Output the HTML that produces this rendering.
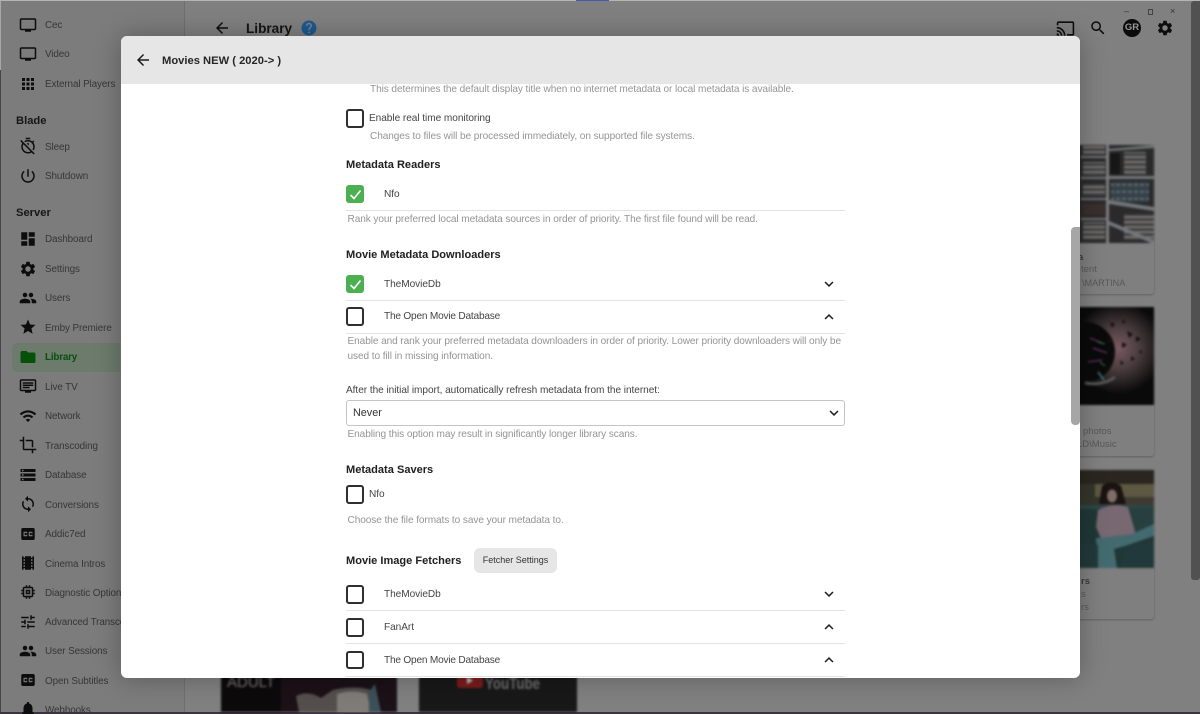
<!DOCTYPE html>
<html><head><meta charset="utf-8"><title>Library</title>
<style>
html,body{margin:0;padding:0;width:1200px;height:714px;overflow:hidden;background:#808080}
body{font-family:"Liberation Sans",sans-serif;position:relative}
#w{position:absolute;left:0;top:0;width:1200px;height:714px;overflow:hidden;filter:blur(.3px)}
.t{position:absolute;white-space:nowrap;line-height:16px;height:16px;margin-top:1.5px}
.s{font-size:9.9px;color:#363636;left:45px;letter-spacing:-.1px}
.h{font-size:11.2px;font-weight:bold;color:#161616;left:16px;margin-top:.5px}
.i{position:absolute;width:18px;height:18px;fill:#0d0d0d}
.d{font-size:10.1px;color:#949494;letter-spacing:-.09px}
.b{font-size:10.1px;color:#444;letter-spacing:-.05px}
.g{font-size:11.05px;font-weight:bold;color:#202020;left:346px;margin-top:.5px}
.c{position:absolute;left:345.5px;width:14.5px;height:14.5px;border:2px solid #2f2f2f;border-radius:3px;background:#fff}
.k{position:absolute;left:345.5px;width:18.5px;height:18.5px;border-radius:3px;background:#4caf50}
.k svg{position:absolute;left:2px;top:2px;width:15px;height:15px;fill:none;stroke:#fff;stroke-width:1.6}
.l{position:absolute;left:346px;width:499px;height:1px;background:#e2e2e2}
.v{position:absolute;left:820px;width:18px;height:18px;fill:#1e1e1e}
.card{position:absolute;left:1040px;width:114px;background:#7f7f7f;border-radius:3px;box-shadow:0 1px 2px rgba(0,0,0,.25)}
.ct{font-size:9.5px;color:#585858}
.im{position:absolute;filter:blur(1.1px)}
</style></head><body><div id="w">
<svg width="0" height="0" style="position:absolute">
<symbol id="tv" viewBox="0 0 24 24"><path d="M21 3H3c-1.1 0-2 .9-2 2v12c0 1.1.9 2 2 2h5v2h8v-2h5c1.1 0 1.99-.9 1.99-2L23 5c0-1.1-.9-2-2-2zm0 14H3V5h18v12z"/></symbol>
<symbol id="ltv" viewBox="0 0 24 24"><path d="M21 3H3c-1.1 0-2 .9-2 2v12c0 1.1.9 2 2 2h5v2h8v-2h5c1.1 0 1.99-.9 1.99-2L23 5c0-1.1-.9-2-2-2zm0 14H3V5h18v12zM5 7h14v2H5zM5 10h14v2H5zM5 13h9v2H5z"/></symbol>
<symbol id="apps" viewBox="0 0 24 24"><path d="M4 8h4V4H4v4zm6 12h4v-4h-4v4zm-6 0h4v-4H4v4zm0-6h4v-4H4v4zm6 0h4v-4h-4v4zm6-10v4h4V4h-4zm-6 4h4V4h-4v4zm6 6h4v-4h-4v4zm0 6h4v-4h-4v4z"/></symbol>
<symbol id="toff" viewBox="0 0 24 24"><path d="M19.04 4.55l-1.42 1.42C16.07 4.74 14.12 4 12 4c-1.83 0-3.53.55-4.95 1.48l1.46 1.46C9.53 6.35 10.73 6 12 6c3.87 0 7 3.13 7 7 0 1.27-.35 2.47-.94 3.49l1.45 1.45C20.45 16.53 21 14.83 21 13c0-2.12-.74-4.07-1.97-5.61l1.42-1.42-1.41-1.42zM15 1H9v2h6V1zm-4 8.44l2 2V8h-2v1.44zM3.02 4L1.61 5.41 4.36 8.16C3.5 9.57 3 11.22 3 13c0 4.97 4.03 9 9 9 1.78 0 3.44-.5 4.84-1.36l2.75 2.75 1.41-1.41L3.02 4zM12 20c-3.87 0-7-3.13-7-7 0-1.23.32-2.39.88-3.39l9.51 9.51c-1 .56-2.16.88-3.39.88z"/></symbol>
<symbol id="pow" viewBox="0 0 24 24"><path d="M13 3h-2v10h2V3zm4.83 2.17l-1.42 1.42C17.99 7.86 19 9.81 19 12c0 3.87-3.13 7-7 7s-7-3.13-7-7c0-2.19 1.01-4.14 2.58-5.42L6.17 5.17C4.23 6.82 3 9.26 3 12c0 4.97 4.03 9 9 9s9-4.03 9-9c0-2.74-1.23-5.18-3.17-6.83z"/></symbol>
<symbol id="dash" viewBox="0 0 24 24"><path d="M3 13h8V3H3v10zm0 8h8v-6H3v6zm10 0h8V11h-8v10zm0-18v6h8V3h-8z"/></symbol>
<symbol id="gear" viewBox="0 0 24 24"><path d="M19.14 12.94c.04-.3.06-.61.06-.94 0-.32-.02-.64-.07-.94l2.03-1.58c.18-.14.23-.41.12-.61l-1.92-3.32c-.12-.22-.37-.29-.59-.22l-2.39.96c-.5-.38-1.03-.7-1.62-.94l-.36-2.54c-.04-.24-.24-.41-.48-.41h-3.84c-.24 0-.43.17-.47.41l-.36 2.54c-.59.24-1.13.57-1.62.94l-2.39-.96c-.22-.08-.47 0-.59.22L2.74 8.87c-.12.21-.08.47.12.61l2.03 1.58c-.05.3-.09.63-.09.94s.02.64.07.94l-2.03 1.58c-.18.14-.23.41-.12.61l1.92 3.32c.12.22.37.29.59.22l2.39-.96c.5.38 1.03.7 1.62.94l.36 2.54c.05.24.24.41.48.41h3.84c.24 0 .44-.17.47-.41l.36-2.54c.59-.24 1.13-.56 1.62-.94l2.39.96c.22.08.47 0 .59-.22l1.92-3.32c.12-.22.07-.47-.12-.61l-2.01-1.58zM12 15.6c-1.98 0-3.6-1.62-3.6-3.6s1.62-3.6 3.6-3.6 3.6 1.62 3.6 3.6-1.62 3.6-3.6 3.6z"/></symbol>
<symbol id="ppl" viewBox="0 0 24 24"><path d="M16 11c1.66 0 2.99-1.34 2.99-3S17.66 5 16 5c-1.66 0-3 1.34-3 3s1.34 3 3 3zm-8 0c1.66 0 2.99-1.34 2.99-3S9.66 5 8 5C6.34 5 5 6.34 5 8s1.34 3 3 3zm0 2c-2.33 0-7 1.17-7 3.5V19h14v-2.5c0-2.33-4.67-3.5-7-3.5zm8 0c-.29 0-.62.02-.97.05 1.16.84 1.97 1.97 1.97 3.45V19h6v-2.5c0-2.33-4.67-3.5-7-3.5z"/></symbol>
<symbol id="star" viewBox="0 0 24 24"><path d="M12 17.27L18.18 21l-1.64-7.03L22 9.24l-7.19-.61L12 2 9.19 8.63 2 9.24l5.46 4.73L5.82 21z"/></symbol>
<symbol id="fold" viewBox="0 0 24 24"><path d="M10 4H4c-1.1 0-1.99.9-1.99 2L2 18c0 1.1.9 2 2 2h16c1.1 0 2-.9 2-2V8c0-1.1-.9-2-2-2h-8l-2-2z"/></symbol>
<symbol id="wifi" viewBox="0 0 24 24"><path d="M1 9l2 2c4.97-4.97 13.03-4.97 18 0l2-2C16.93 2.93 7.08 2.93 1 9zm8 8l3 3 3-3c-1.65-1.66-4.34-1.66-6 0zm-4-4l2 2c2.76-2.76 7.24-2.76 10 0l2-2C15.14 9.14 8.87 9.14 5 13z"/></symbol>
<symbol id="crop" viewBox="0 0 24 24"><path d="M17 15h2V7c0-1.1-.9-2-2-2H9v2h8v8zM7 17V1H5v4H1v2h4v10c0 1.1.9 2 2 2h10v4h2v-4h4v-2H7z"/></symbol>
<symbol id="db" viewBox="0 0 24 24"><path d="M2 20h20v-4H2v4zm2-3h2v2H4v-2zM2 4v4h20V4H2zm4 3H4V5h2v2zm-4 7h20v-4H2v4zm2-3h2v2H4v-2z"/></symbol>
<symbol id="sync" viewBox="0 0 24 24"><path d="M12 4V1L8 5l4 4V6c3.31 0 6 2.69 6 6 0 1.01-.25 1.97-.7 2.8l1.46 1.46C19.54 15.03 20 13.57 20 12c0-4.42-3.58-8-8-8zm0 14c-3.31 0-6-2.69-6-6 0-1.01.25-1.97.7-2.8L5.24 7.74C4.46 8.97 4 10.43 4 12c0 4.42 3.58 8 8 8v3l4-4-4-4v3z"/></symbol>
<symbol id="cc" viewBox="0 0 24 24"><path d="M19 4H5c-1.11 0-2 .9-2 2v12c0 1.1.89 2 2 2h14c1.1 0 2-.9 2-2V6c0-1.1-.9-2-2-2zm-8 7H9.5v-.5h-2v3h2V13H11v1c0 .55-.45 1-1 1H7c-.55 0-1-.45-1-1v-4c0-.55.45-1 1-1h3c.55 0 1 .45 1 1v1zm7 0h-1.5v-.5h-2v3h2V13H18v1c0 .55-.45 1-1 1h-3c-.55 0-1-.45-1-1v-4c0-.55.45-1 1-1h3c.55 0 1 .45 1 1v1z"/></symbol>
<symbol id="film" viewBox="0 0 24 24"><path d="M18 3v2h-2V3H8v2H6V3H4v18h2v-2h2v2h8v-2h2v2h2V3h-2zM8 17H6v-2h2v2zm0-4H6v-2h2v2zm0-4H6V7h2v2zm10 8h-2v-2h2v2zm0-4h-2v-2h2v2zm0-4h-2V7h2v2z"/></symbol>
<symbol id="mem" viewBox="0 0 24 24"><path d="M15 9H9v6h6V9zm-2 4h-2v-2h2v2zm8-2V9h-2V7c0-1.1-.9-2-2-2h-2V3h-2v2h-2V3H9v2H7c-1.1 0-2 .9-2 2v2H3v2h2v2H3v2h2v2c0 1.1.9 2 2 2h2v2h2v-2h2v2h2v-2h2c1.1 0 2-.9 2-2v-2h2v-2h-2v-2h2zm-4 6H7V7h10v10z"/></symbol>
<symbol id="tune" viewBox="0 0 24 24"><path d="M3 17v2h6v-2H3zM3 5v2h10V5H3zm10 16v-2h8v-2h-8v-2h-2v6h2zM7 9v2H3v2h4v2h2V9H7zm14 4v-2H11v2h10zm-6-4h2V7h4V5h-4V3h-2v6z"/></symbol>
<symbol id="bell" viewBox="0 0 24 24"><path d="M12 22c1.1 0 2-.9 2-2h-4c0 1.1.9 2 2 2zm6-6v-5c0-3.07-1.63-5.64-4.5-6.32V4c0-.83-.67-1.5-1.5-1.5s-1.5.67-1.5 1.5v.68C7.64 5.36 6 7.92 6 11v5l-2 2v1h16v-1l-2-2z"/></symbol>
<symbol id="back" viewBox="0 0 24 24"><path d="M20 11H7.83l5.59-5.59L12 4l-8 8 8 8 1.41-1.41L7.83 13H20v-2z"/></symbol>
<symbol id="cast" viewBox="0 0 24 24"><path d="M21 3H3c-1.1 0-2 .9-2 2v3h2V5h18v14h-7v2h7c1.1 0 2-.9 2-2V5c0-1.1-.9-2-2-2zM1 18v3h3c0-1.66-1.34-3-3-3zm0-4v2c2.76 0 5 2.24 5 5h2c0-3.87-3.13-7-7-7zm0-4v2c4.97 0 9 4.03 9 9h2c0-6.08-4.93-11-11-11z"/></symbol>
<symbol id="srch" viewBox="0 0 24 24"><path d="M15.5 14h-.79l-.28-.27C15.41 12.59 16 11.11 16 9.5 16 5.91 13.09 3 9.5 3S3 5.91 3 9.5 5.91 16 9.5 16c1.61 0 3.09-.59 4.23-1.57l.27.28v.79l5 4.99L20.49 19l-4.99-5zm-6 0C7.01 14 5 11.99 5 9.5S7.01 5 9.5 5 14 7.01 14 9.5 11.99 14 9.5 14z"/></symbol>
<symbol id="dn" viewBox="0 0 24 24"><path d="M7.41 8.59L12 13.17l4.59-4.58L18 10l-6 6-6-6z"/></symbol>
<symbol id="up" viewBox="0 0 24 24"><path d="M7.41 15.41L12 10.83l4.59 4.58L18 14l-6-6-6 6z"/></symbol>
<symbol id="help" viewBox="0 0 24 24"><path d="M12 2C6.48 2 2 6.48 2 12s4.48 10 10 10 10-4.48 10-10S17.52 2 12 2zm1 17h-2v-2h2v2zm2.07-7.75l-.9.92C13.45 12.9 13 13.5 13 15h-2v-.5c0-1.1.45-2.1 1.17-2.83l1.24-1.26c.37-.36.59-.86.59-1.41 0-1.1-.9-2-2-2s-2 .9-2 2H8c0-2.21 1.79-4 4-4s4 1.79 4 4c0 .88-.36 1.68-.93 2.25z"/></symbol>
</svg>

<!-- page chrome -->
<div style="position:absolute;left:0;top:0;width:1200px;height:1px;background:#b5b5b5"></div>
<div style="position:absolute;left:576px;top:0;width:33px;height:1px;background:#4a58ad"></div>
<div style="position:absolute;left:0;top:70px;width:1px;height:644px;background:#45454f"></div>
<div style="position:absolute;left:0;top:1px;width:1px;height:69px;background:#a8a8a8"></div>
<div style="position:absolute;left:184px;top:1px;width:1px;height:712px;background:#6f6f6f"></div>
<div style="position:absolute;left:1px;top:1px;width:183px;height:712px;background:#7c7c7c"></div>
<div style="position:absolute;left:1191px;top:1px;width:9px;height:579px;background:#515151;border-radius:3px 0 3px 3px"></div>
<div style="position:absolute;left:0;top:712px;width:1200px;height:2px;background:#3c3340"></div>

<!-- sidebar -->
<svg class="i" style="left:19px;top:16px"><use href="#tv"/></svg><div class="t s" style="top:16.5px">Cec</div>
<svg class="i" style="left:19px;top:45px"><use href="#tv"/></svg><div class="t s" style="top:45.5px">Video</div>
<svg class="i" style="left:19px;top:75px"><use href="#apps"/></svg><div class="t s" style="top:75px">External Players</div>
<div class="t h" style="top:112px">Blade</div>
<svg class="i" style="left:19px;top:137px"><use href="#toff"/></svg><div class="t s" style="top:138px">Sleep</div>
<svg class="i" style="left:19px;top:167px"><use href="#pow"/></svg><div class="t s" style="top:167.5px">Shutdown</div>
<div class="t h" style="top:204.5px">Server</div>
<svg class="i" style="left:19px;top:230px"><use href="#dash"/></svg><div class="t s" style="top:230.5px">Dashboard</div>
<svg class="i" style="left:19px;top:260px"><use href="#gear"/></svg><div class="t s" style="top:260.5px">Settings</div>
<svg class="i" style="left:19px;top:289px"><use href="#ppl"/></svg><div class="t s" style="top:289.5px">Users</div>
<svg class="i" style="left:19px;top:318px"><use href="#star"/></svg><div class="t s" style="top:319px">Emby Premiere</div>
<div style="position:absolute;left:12px;top:343px;width:108px;height:29px;background:#6c7b6c;border-radius:5px 0 0 5px"></div>
<svg class="i" style="left:19px;top:348px;fill:#07500a"><use href="#fold"/></svg><div class="t s" style="top:348.5px;color:#0a4f0c;font-weight:bold;letter-spacing:-.2px">Library</div>
<svg class="i" style="left:19px;top:377px"><use href="#ltv"/></svg><div class="t s" style="top:378px">Live TV</div>
<svg class="i" style="left:19px;top:407px"><use href="#wifi"/></svg><div class="t s" style="top:407.5px">Network</div>
<svg class="i" style="left:19px;top:436px"><use href="#crop"/></svg><div class="t s" style="top:437px">Transcoding</div>
<svg class="i" style="left:19px;top:466px"><use href="#db"/></svg><div class="t s" style="top:466.5px">Database</div>
<svg class="i" style="left:19px;top:495px"><use href="#sync"/></svg><div class="t s" style="top:496px">Conversions</div>
<svg class="i" style="left:19px;top:525px"><use href="#cc"/></svg><div class="t s" style="top:525.5px">Addic7ed</div>
<svg class="i" style="left:19px;top:554px"><use href="#film"/></svg><div class="t s" style="top:555px">Cinema Intros</div>
<svg class="i" style="left:19px;top:583px"><use href="#mem"/></svg><div class="t s" style="top:584px">Diagnostic Options</div>
<svg class="i" style="left:19px;top:613px"><use href="#tune"/></svg><div class="t s" style="top:613.5px">Advanced Transcoding</div>
<svg class="i" style="left:19px;top:642px"><use href="#ppl"/></svg><div class="t s" style="top:642.5px">User Sessions</div>
<svg class="i" style="left:19px;top:671px"><use href="#cc"/></svg><div class="t s" style="top:672px">Open Subtitles</div>
<svg class="i" style="left:19px;top:700px"><use href="#bell"/></svg><div class="t s" style="top:701px">Webhooks</div>

<!-- header -->
<svg class="i" style="left:213px;top:19px"><use href="#back"/></svg>
<div class="t" style="left:246px;top:19.5px;font-size:13.6px;font-weight:bold;color:#141414">Library</div>
<svg class="i" style="left:300px;top:19px;fill:#1d5a90"><use href="#help"/></svg>
<svg class="i" style="left:1056px;top:19px;width:19px;height:19px"><use href="#cast"/></svg>
<svg class="i" style="left:1089px;top:19px"><use href="#srch"/></svg>
<div style="position:absolute;left:1123px;top:19px;width:18px;height:18px;border-radius:50%;background:#0b0b0b;color:#9a9a9a;font-size:9.5px;font-weight:bold;line-height:18px;text-align:center">GR</div>
<svg class="i" style="left:1156px;top:19px"><use href="#gear"/></svg>
<div class="t" style="left:1124px;top:1.5px;font-size:9px;color:#333">–</div>
<div style="position:absolute;left:1148px;top:9px;width:3px;height:4px;border:1px solid #444"></div>
<div class="t" style="left:1170px;top:1.5px;font-size:9px;color:#333">×</div>

<!-- cards -->
<div class="card" style="top:145px;height:149px"></div>
<div class="card" style="top:307px;height:149px"></div>
<div class="card" style="top:470px;height:149px"></div>
<svg class="im" style="left:1040px;top:145px" width="114" height="98" viewBox="1040 145 114 98">
<defs><pattern id="st" width="4" height="5" patternUnits="userSpaceOnUse"><rect width="4" height="5" fill="#3f3f40"/><rect y="1" width="4" height="2.2" fill="#767472"/></pattern>
<pattern id="st2" width="6" height="7" patternUnits="userSpaceOnUse"><rect width="6" height="7" fill="#35424a"/><rect y="2" width="4" height="1.6" fill="#6c7074"/></pattern></defs>
<rect x="1040" y="145" width="114" height="98" fill="#2b2a2b"/>
<rect x="1083" y="146" width="22" height="9" fill="url(#st)"/><rect x="1083" y="162" width="22" height="14" fill="url(#st)"/>
<rect x="1083" y="184" width="22" height="12" fill="url(#st)"/><rect x="1083" y="204" width="22" height="11" fill="#39302d"/><rect x="1083" y="222" width="22" height="18" fill="url(#st)"/>
<rect x="1124" y="152" width="22" height="23" fill="url(#st)"/><rect x="1111" y="182" width="38" height="20" fill="url(#st2)"/>
<rect x="1124" y="214" width="30" height="26" fill="url(#st)"/><rect x="1110" y="153" width="10" height="21" fill="#161616"/>
<rect x="1106" y="145" width="3" height="98" fill="#7d7d7d"/>
<path d="M1081 156h25v2h-25zM1081 177h25v2h-25zM1081 198h25v2h-25zM1081 218h25v2h-25zM1109 149l45-4v3l-45 3zM1109 176h45v3h-45zM1109 200l45 7v4l-45-7zM1109 221l45 19v3h-3l-42-18z" fill="#72767a"/>
</svg>
<svg class="im" style="left:1040px;top:307px" width="114" height="98" viewBox="1040 307 114 98">
<defs><radialGradient id="a" gradientUnits="userSpaceOnUse" cx="1118" cy="348" r="46"><stop offset="0" stop-color="#7a5a62"/><stop offset=".45" stop-color="#4b3d40"/><stop offset="1" stop-color="#0a0a0a"/></radialGradient></defs>
<rect x="1040" y="307" width="114" height="98" fill="#070707"/>
<rect x="1040" y="307" width="114" height="98" fill="url(#a)"/>
<circle cx="1085" cy="352" r="30" fill="#0a0a0a"/>
<path d="M1110 322l5 2-3 4zM1122 320l4 1-3 3zM1127 331l6 3-4 4zM1136 336l5 3-5 3zM1122 342l5 3-5 3zM1131 356l4 3-4 2zM1120 360l4 3-3 2zM1140 350l3 3-4 0zM1108 338l4 3-4 2zM1112 352l3 2-3 2zM1105 368l5 2-3 3z" fill="#141012"/>
<path d="M1090 338l12 5M1093 348l14 5M1088 362l14-2" stroke="#7c3a78" stroke-width="1" fill="none"/><path d="M1098 342l7 2M1100 362l5 4" stroke="#357f52" stroke-width="1" fill="none"/>
<path d="M1098 372l6 8" stroke="#3f7f90" stroke-width="1.5" fill="none"/>
<path d="M1085 383q18 3 30-6" stroke="#555" stroke-width="3" fill="none"/>
</svg>
<svg class="im" style="left:1040px;top:470px" width="114" height="98" viewBox="1040 470 114 98">
<rect x="1040" y="470" width="114" height="98" fill="#203736"/>
<rect x="1040" y="470" width="114" height="14" fill="#2a261f"/><rect x="1040" y="484" width="114" height="21" fill="#34352a"/><rect x="1095" y="484" width="59" height="13" fill="#5c5842"/>
<rect x="1125" y="497" width="29" height="8" fill="#3f3a30"/>
<path d="M1040 505h114v4h-114z" fill="#2b4746"/>
<path d="M1125 508h29v22l-20 4z" fill="#27403f"/>
<path d="M1102 486q9-7 19 0l5 18h-27z" fill="#191311"/><ellipse cx="1112" cy="496" rx="5" ry="6.5" fill="#7f6d67"/>
<path d="M1098 510q15-8 30-3l8 28-12 6h-22l-6-14z" fill="#786872"/>
<path d="M1096 538q22-2 36-4l22-10v12l-26 9-14 4 3 19h-19z" fill="#436a6e"/>
<path d="M1040 545q30-5 58 0v23h-58zM1125 548l29-8v28h-34z" fill="#21393a"/>
</svg>
<div class="t ct" style="left:1078px;top:248px;font-weight:bold;color:#3c3c3c">a</div>
<div class="t ct" style="left:1081px;top:260.5px">tent</div>
<div class="t ct" style="left:1082px;top:273.5px;font-size:9.1px">\MARTINA</div>
<div class="t ct" style="left:1083px;top:422.5px">photos</div>
<div class="t ct" style="left:1077px;top:435.5px">LD\Music</div>
<div class="t ct" style="left:1081px;top:572.5px;font-weight:bold;color:#3c3c3c">rs</div>
<div class="t ct" style="left:1081px;top:585.5px">s</div>
<div class="t ct" style="left:1081px;top:598.5px">rs</div>

<!-- bottom posters -->
<svg class="im" style="left:221px;top:660px" width="176" height="52" viewBox="0 0 176 52">
<rect width="176" height="52" fill="#0d0a0c"/><rect x="60" y="0" width="116" height="52" fill="#1b1116"/>
<path d="M75 36q12-6 25 2l12-8q22-5 38 0l6 22H78z" fill="#544f4d"/><path d="M116 34q16-5 30 0l4 18h-34z" fill="#7f7b76"/><path d="M148 32l6-8 6 28h-12z" fill="#3c505a"/>
<text x="6" y="27" font-family="Liberation Sans,sans-serif" font-size="15" fill="#767676">ADULT</text>
</svg>
<svg class="im" style="left:419px;top:660px" width="158" height="52" viewBox="0 0 158 52">
<rect width="158" height="52" fill="#181818"/><rect x="38" y="13" width="26" height="15" rx="3" fill="#7a1c1c"/><path d="M48 17l6 3.5-6 3.5z" fill="#bbb"/>
<text x="66" y="29" font-family="Liberation Sans,sans-serif" font-size="17" font-weight="bold" fill="#6e6e6e" textLength="55" lengthAdjust="spacingAndGlyphs">YouTube</text>
</svg>

<!-- modal -->
<div style="position:absolute;left:120.5px;top:36px;width:959.5px;height:642px;background:#fff;border-radius:6px;box-shadow:0 0 26px rgba(0,0,0,.28);overflow:hidden">
<div style="position:absolute;left:0;top:0;width:959.5px;height:47.5px;background:#e6e6e6"></div>
<div style="position:absolute;left:950.5px;top:191px;width:9px;height:198px;background:#a6a6a6;border-radius:4px 0 4px 4px"></div>
</div>
<svg class="i" style="left:133.5px;top:51px;fill:#1c1c1c"><use href="#back"/></svg>
<div class="t" style="left:162px;top:51.5px;font-size:11.2px;font-weight:bold;color:#262626">Movies NEW ( 2020-&gt; )</div>

<div class="t d" style="left:370px;top:80.5px">This determines the default display title when no internet metadata or local metadata is available.</div>
<div class="c" style="top:109px"></div>
<div class="t b" style="left:369px;top:109.5px">Enable real time monitoring</div>
<div class="t d" style="left:370px;top:127.5px">Changes to files will be processed immediately, on supported file systems.</div>

<div class="t g" style="top:156px">Metadata Readers</div>
<div class="k" style="top:184.5px"><svg viewBox="0 0 15 15"><path d="M2.5 8l3.5 3.5L12.5 3.5"/></svg></div>
<div class="t b" style="left:384px;top:185.5px">Nfo</div>
<div class="l" style="top:210px"></div>
<div class="t d" style="left:347.5px;top:210.5px">Rank your preferred local metadata sources in order of priority. The first file found will be read.</div>

<div class="t g" style="top:246px">Movie Metadata Downloaders</div>
<div class="k" style="top:274.5px"><svg viewBox="0 0 15 15"><path d="M2.5 8l3.5 3.5L12.5 3.5"/></svg></div>
<div class="t b" style="left:384px;top:275.5px">TheMovieDb</div>
<svg class="v" style="top:275px"><use href="#dn"/></svg>
<div class="l" style="top:300px"></div>
<div class="c" style="top:307px"></div>
<div class="t b" style="left:384px;top:307.5px;letter-spacing:-.2px">The Open Movie Database</div>
<svg class="v" style="top:308px"><use href="#up"/></svg>
<div class="l" style="top:333px"></div>
<div class="t d" style="left:347.5px;top:332.5px">Enable and rank your preferred metadata downloaders in order of priority. Lower priority downloaders will only be</div>
<div class="t d" style="left:347.5px;top:347.5px">used to fill in missing information.</div>

<div class="t b" style="left:346px;top:381.5px">After the initial import, automatically refresh metadata from the internet:</div>
<div style="position:absolute;left:346px;top:400px;width:497px;height:24px;border:1px solid #c4c4c4;border-radius:3px;background:#fff"></div>
<div class="t" style="left:353px;top:403px;font-size:10.8px;color:#333">Never</div>
<svg class="v" style="left:825px;top:404px"><use href="#dn"/></svg>
<div class="t d" style="left:347.5px;top:425.5px">Enabling this option may result in significantly longer library scans.</div>

<div class="t g" style="top:461px">Metadata Savers</div>
<div class="c" style="top:485px"></div>
<div class="t b" style="left:369px;top:485.5px">Nfo</div>
<div class="t d" style="left:347.5px;top:511.5px">Choose the file formats to save your metadata to.</div>

<div class="t g" style="top:552px">Movie Image Fetchers</div>
<div style="position:absolute;left:474px;top:548px;width:83px;height:25px;background:#e6e6e6;border-radius:6px;font-size:9px;color:#333;line-height:25px;text-align:center">Fetcher Settings</div>

<div class="c" style="top:585px"></div>
<div class="t b" style="left:384px;top:585.5px">TheMovieDb</div>
<svg class="v" style="top:585px"><use href="#dn"/></svg>
<div class="l" style="top:610px"></div>
<div class="c" style="top:618px"></div>
<div class="t b" style="left:384px;top:618.5px">FanArt</div>
<svg class="v" style="top:618px"><use href="#up"/></svg>
<div class="l" style="top:643px"></div>
<div class="c" style="top:650.5px"></div>
<div class="t b" style="left:384px;top:651.5px;letter-spacing:-.2px">The Open Movie Database</div>
<svg class="v" style="top:651px"><use href="#up"/></svg>
<div class="l" style="top:676px"></div>
</div></body></html>
